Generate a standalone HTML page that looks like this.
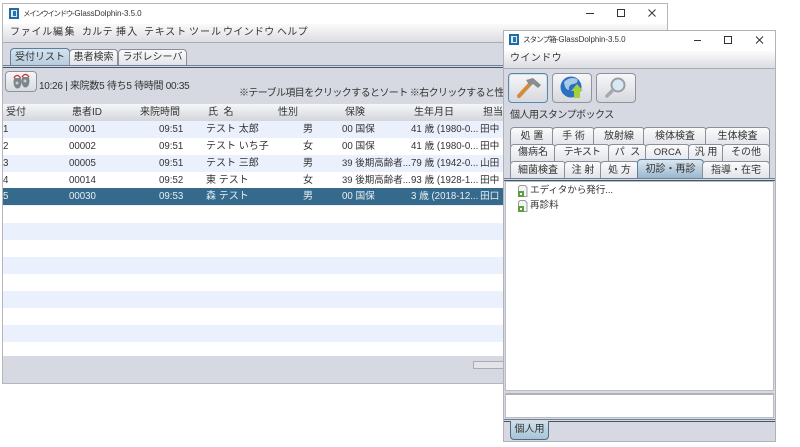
<!DOCTYPE html>
<html><head><meta charset="utf-8"><style>
html,body{margin:0;padding:0;background:#fff}
body{width:800px;height:447px;position:relative;overflow:hidden;font-family:"Liberation Sans","Noto Sans CJK JP",sans-serif;color:#333}
.a,.a *{box-sizing:border-box}
.a{position:absolute}
.t{position:absolute;white-space:nowrap;line-height:14px;font-size:10px}
.tab{position:absolute;border:1px solid #8a8f98;border-bottom:none;border-radius:4px 4px 0 0;background:linear-gradient(#fbfbfc,#e0e2e8);text-align:center;font-size:10px;white-space:nowrap;color:#333}
.sel{background:linear-gradient(#dbe7f0,#96b5cd);border-color:#5b7f9c}
.h{position:absolute;top:104px;height:17px;background:linear-gradient(#f5f6f8,#d3d6dc);border-right:1px solid #a5a8af;border-bottom:2px solid #a9acb4;font-size:10px;line-height:17px;padding-left:3px;color:#333;white-space:nowrap}
.r{position:absolute;left:3px;width:500px;height:17px}
.c{position:absolute;font-size:9.7px;line-height:17px;white-space:nowrap;top:0;color:#333}
.w .c{color:#e6eef3}
.ib{position:absolute;top:73px;height:28px;border:1px solid #8f939b;border-radius:4px;background:linear-gradient(#f7f7f9,#d6d8de)}
.k{font-size:7.5px;letter-spacing:-1.2px}
.l{font-size:8px;letter-spacing:-.05px}
</style></head><body>

<!-- main window -->
<div class="a" style="left:2px;top:3px;width:666px;height:381px;border:1px solid #b4b6ba;background:#fff"></div>
<div class="a" style="left:3px;top:24px;width:664px;height:18px;background:linear-gradient(#fafafb,#dcdde2)"></div>
<div class="a" style="left:3px;top:42px;width:500px;height:341px;background:#d6d9e1;border-top:1px solid #a9acb3"></div>
<svg class="a" style="left:9px;top:8px" width="10" height="11"><rect width="10" height="11" fill="#1f6da8"/><rect x="2" y="2" width="6" height="7" fill="#dfeaf3"/><rect x="4" y="3" width="3" height="5" fill="#2a75ad"/></svg>
<div class="t" style="left:23px;top:7px"><span class="k" style="letter-spacing:-1.4px">メインウインドウ</span><span class="l">-GlassDolphin-3.5.0</span></div>
<div class="t" style="left:10px;top:26px;font-size:10px;letter-spacing:.75px">ファイル</div>
<div class="t" style="left:53px;top:26px;letter-spacing:1.6px">編集</div>
<div class="t" style="left:82px;top:26px;letter-spacing:.3px">カルテ</div>
<div class="t" style="left:116px;top:26px;letter-spacing:1.2px">挿入</div>
<div class="t" style="left:144px;top:26px;letter-spacing:.8px">テキスト</div>
<div class="t" style="left:189px;top:26px;letter-spacing:1px">ツール</div>
<div class="t" style="left:223px;top:26px;letter-spacing:.3px">ウインドウ</div>
<div class="t" style="left:277px;top:26px;letter-spacing:.3px">ヘルプ</div>
<svg class="a" style="left:580px;top:6px" width="82" height="14" fill="none" stroke="#333" stroke-width="1"><path d="M6 7.500h8"/><rect x="37.500" y="3.500" width="7" height="7"/><path d="M68.500 3.500l7 7M75.500 3.500l-7 7"/></svg>

<div class="tab sel" style="left:10px;top:48px;width:58px;height:18px;line-height:17px;background:linear-gradient(#d4e3ee,#b4cadb)">受付リスト</div>
<div class="tab" style="left:69px;top:49px;width:47px;height:16px;line-height:15px">患者検索</div>
<div class="tab" style="left:118px;top:49px;width:67px;height:16px;line-height:15px">ラボレシーバ</div>
<div class="a" style="left:3px;top:65px;width:500px;height:3px;background:#d6d9e1;border-top:1px solid #6e8194;border-bottom:1px solid #44546a"></div>

<div class="a" style="left:5px;top:71px;width:32px;height:21px;border:1px solid #8f939b;border-radius:4px;background:linear-gradient(#f6f6f8,#d8dae0)"></div>
<svg class="a" style="left:12px;top:72px" width="19" height="18"><ellipse cx="5.500" cy="10" rx="4" ry="6.500" fill="#7b868b"/><ellipse cx="13.500" cy="9" rx="4" ry="6.500" fill="#7b868b"/><circle cx="5" cy="11" r="1.500" fill="#c9d0d3"/><circle cx="13" cy="9" r="1.500" fill="#c9d0d3"/><path d="M2 6q3-5 6.500 0M10 5q3.500-5 7 0" fill="#fff" stroke="#c8413e" stroke-width="1.500"/></svg>
<div class="t" style="left:39px;top:80px;font-size:10px;letter-spacing:-.28px">10:26 | 来院数5 待ち5 待時間 00:35</div>
<div class="t" style="left:239px;top:87px;font-size:10px;letter-spacing:-.6px;width:264px;overflow:hidden">※テーブル項目をクリックするとソート ※右クリックすると性別</div>

<!-- table -->
<div class="h" style="left:3px;width:66px">受付</div>
<div class="h" style="left:69px;width:68px">患者ID</div>
<div class="h" style="left:137px;width:68px">来院時間</div>
<div class="h" style="left:205px;width:70px">氏 &nbsp;名</div>
<div class="h" style="left:275px;width:67px">性別</div>
<div class="h" style="left:342px;width:69px">保険</div>
<div class="h" style="left:411px;width:69px">生年月日</div>
<div class="h" style="left:480px;width:23px;border-right:none;overflow:hidden">担当</div>
<div class="a" style="left:3px;top:121px;width:500px;height:235px;background:repeating-linear-gradient(#ebf1fc 0,#ebf1fc 17px,#fff 17px,#fff 34px)"></div>

<div class="r" style="top:121px"><span class="c" style="left:0">1</span><span class="c" style="left:66px">00001</span><span class="c" style="left:156px">09:51</span><span class="c" style="left:203px;font-size:10px">テスト 太郎</span><span class="c" style="left:300px;font-size:10px">男</span><span class="c" style="left:339px">00 国保</span><span class="c" style="left:408px">41 歳 (1980-0...</span><span class="c" style="left:477px">田中</span></div>
<div class="r" style="top:138px"><span class="c" style="left:0">2</span><span class="c" style="left:66px">00002</span><span class="c" style="left:156px">09:51</span><span class="c" style="left:203px;font-size:10px">テスト いち子</span><span class="c" style="left:300px;font-size:10px">女</span><span class="c" style="left:339px">00 国保</span><span class="c" style="left:408px">41 歳 (1980-0...</span><span class="c" style="left:477px">田中</span></div>
<div class="r" style="top:155px"><span class="c" style="left:0">3</span><span class="c" style="left:66px">00005</span><span class="c" style="left:156px">09:51</span><span class="c" style="left:203px;font-size:10px">テスト 三郎</span><span class="c" style="left:300px;font-size:10px">男</span><span class="c" style="left:339px;font-size:9.5px">39 後期高齢者...</span><span class="c" style="left:408px">79 歳 (1942-0...</span><span class="c" style="left:477px">山田</span></div>
<div class="r" style="top:172px"><span class="c" style="left:0">4</span><span class="c" style="left:66px">00014</span><span class="c" style="left:156px">09:52</span><span class="c" style="left:203px;font-size:10px">東 テスト</span><span class="c" style="left:300px;font-size:10px">女</span><span class="c" style="left:339px;font-size:9.5px">39 後期高齢者...</span><span class="c" style="left:408px">93 歳 (1928-1...</span><span class="c" style="left:477px">田中</span></div>
<div class="r w" style="top:188px;background:#366a8c"><span class="c" style="left:0">5</span><span class="c" style="left:66px">00030</span><span class="c" style="left:156px">09:53</span><span class="c" style="left:203px;font-size:10px">森 テスト</span><span class="c" style="left:300px;font-size:10px">男</span><span class="c" style="left:339px">00 国保</span><span class="c" style="left:408px">3 歳 (2018-12...</span><span class="c" style="left:477px">田口</span></div>

<div class="a" style="left:473px;top:361px;width:30px;height:8px;border:1px solid #a9acb3;border-right:none;background:#e3e4e8"></div>

<!-- stamp window -->
<div class="a" style="left:503px;top:30px;width:273px;height:412px;border:1px solid #b0b2b8;background:#d6d9e1"></div>
<div class="a" style="left:504px;top:31px;width:271px;height:20px;background:#fff"></div>
<div class="a" style="left:504px;top:51px;width:271px;height:18px;background:linear-gradient(#fbfbfc,#dcdde2);border-bottom:1px solid #a9acb3"></div>
<svg class="a" style="left:509px;top:34px" width="10" height="11"><rect width="10" height="11" fill="#1f6da8"/><rect x="2" y="2" width="6" height="7" fill="#dfeaf3"/><rect x="4" y="3" width="3" height="5" fill="#2a75ad"/></svg>
<div class="t" style="left:523px;top:33px"><span class="k" style="letter-spacing:-.9px">スタンプ箱</span><span class="l">-GlassDolphin-3.5.0</span></div>
<svg class="a" style="left:693px;top:33px" width="71" height="14" fill="none" stroke="#333"><path d="M1 7.500h7"/><rect x="31.500" y="3.500" width="7" height="7"/><path d="M63 3.500l7 7M70 3.500l-7 7"/></svg>
<div class="t" style="left:510px;top:52px;letter-spacing:.4px">ウインドウ</div>

<div class="ib" style="left:508px;width:38px;border-color:#5b86a8;box-shadow:inset 0 0 0 1px #cfe0ec"></div>
<div class="ib" style="left:552px;width:38px"></div>
<div class="ib" style="left:596px;width:38px"></div>
<svg class="a" style="left:516px;top:75px" width="26" height="24"><path d="M3 21L15 8" stroke="#d68a3c" stroke-width="4" stroke-linecap="round"/><path d="M10 5l7-2 8 7-3 3-5-4-3 2z" fill="#8a8d90"/></svg>
<svg class="a" style="left:560px;top:76px" width="24" height="23"><circle cx="11" cy="11" r="10.500" fill="#2d6fc0"/><path d="M4 6q6-6 13-3 2 4-4 5-5 1-4 6-4 0-5-8z" fill="#a6cbe8"/><path d="M17 8l6 7h-3v7h-6v-7h-3z" fill="#a5cf3c"/></svg>
<svg class="a" style="left:604px;top:76px" width="24" height="24"><circle cx="14" cy="9" r="6.500" fill="#d8e8f5" stroke="#9a9ea4" stroke-width="2"/><path d="M9 14L3 20" stroke="#a6a9ae" stroke-width="3.500" stroke-linecap="round"/></svg>

<div class="t" style="left:510px;top:109px;font-size:10px;letter-spacing:-.52px">個人用スタンプボックス</div>

<div class="tab" style="left:510px;top:127px;width:42px;height:18px;line-height:17px">処 置</div>
<div class="tab" style="left:552px;top:127px;width:41px;height:18px;line-height:17px">手 術</div>
<div class="tab" style="left:593px;top:127px;width:50px;height:18px;line-height:17px">放射線</div>
<div class="tab" style="left:643px;top:127px;width:62px;height:18px;line-height:17px">検体検査</div>
<div class="tab" style="left:705px;top:127px;width:63px;height:18px;line-height:17px">生体検査</div>
<div class="tab" style="left:510px;top:144px;width:44px;height:18px;line-height:16px">傷病名</div>
<div class="tab" style="left:554px;top:144px;width:54px;height:18px;line-height:16px;letter-spacing:-.8px">テキスト</div>
<div class="tab" style="left:608px;top:144px;width:37px;height:18px;line-height:16px">パ&nbsp;&nbsp;ス</div>
<div class="tab" style="left:645px;top:144px;width:43px;height:18px;line-height:16px;font-size:9.5px">ORCA</div>
<div class="tab" style="left:688px;top:144px;width:34px;height:18px;line-height:16px">汎 用</div>
<div class="tab" style="left:722px;top:144px;width:46px;height:18px;line-height:16px">その他</div>
<div class="tab" style="left:510px;top:161px;width:54px;height:17px;line-height:17px">細菌検査</div>
<div class="tab" style="left:564px;top:161px;width:36px;height:17px;line-height:17px">注 射</div>
<div class="tab" style="left:600px;top:161px;width:37px;height:17px;line-height:17px">処 方</div>
<div class="tab sel" style="left:637px;top:159px;width:65px;height:19px;line-height:19px">初診・再診</div>
<div class="tab" style="left:702px;top:161px;width:66px;height:17px;line-height:17px">指導・在宅</div>
<div class="a" style="left:504px;top:178px;width:271px;height:3px;background:#d6d9e1;border-top:1px solid #6e8194;border-bottom:1px solid #44546a"></div>

<div class="a" style="left:505px;top:181px;width:269px;height:210px;background:#fff;border:1px solid #b9bcc3"></div>
<svg class="a" style="left:517px;top:185px" width="11" height="12"><path d="M3 .5h5l2 2v9H1.500V2z" fill="#f2f3f3" stroke="#9a9d9f"/><rect x="1" y="6" width="6" height="6" fill="#5f9e3c"/><rect x="3" y="8" width="2" height="2" fill="#fff"/></svg>
<div class="t" style="left:530px;top:184px;font-size:9.6px;letter-spacing:-.1px">エディタから発行...</div>
<svg class="a" style="left:517px;top:200px" width="11" height="12"><path d="M3 .5h5l2 2v9H1.500V2z" fill="#f2f3f3" stroke="#9a9d9f"/><rect x="1" y="6" width="6" height="6" fill="#5f9e3c"/><rect x="3" y="8" width="2" height="2" fill="#fff"/></svg>
<div class="t" style="left:530px;top:199px;font-size:9.6px">再診料</div>

<div class="a" style="left:505px;top:393px;width:269px;height:25px;background:#fff;border:1px solid #b9bcc3;border-top:2px solid #b0b2b8"></div>
<div class="a" style="left:504px;top:419px;width:271px;height:3px;background:#d6d9e1;border-top:1px solid #6e8194;border-bottom:1px solid #44546a"></div>
<div class="a" style="left:510px;top:421px;width:39px;height:19px;background:linear-gradient(#cfe0ec,#a9c4d8);border:1px solid #4d6c85;border-top:none;border-radius:0 0 4px 4px;text-align:center;font-size:10px;line-height:18px;color:#333">個人用</div>
</body></html>
